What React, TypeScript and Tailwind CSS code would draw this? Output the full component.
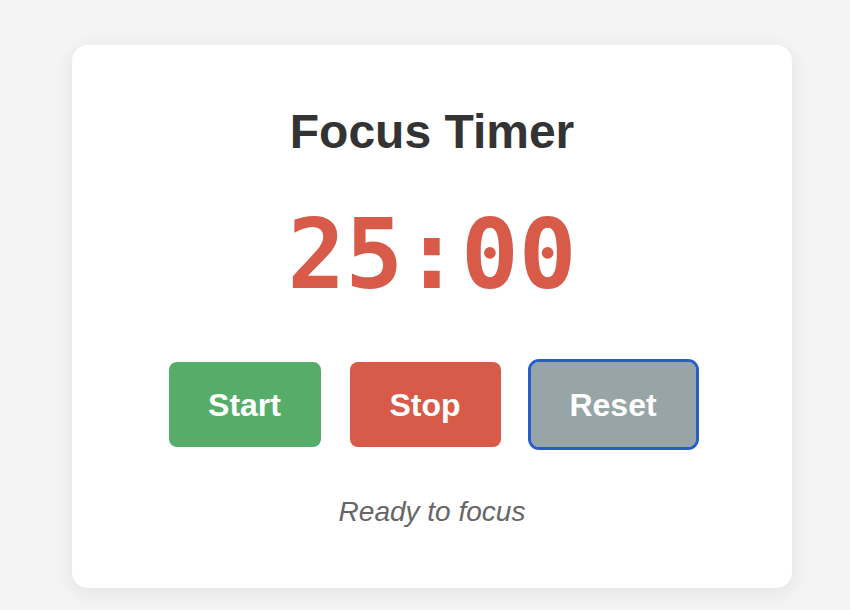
import React, { useState } from 'react';

export default function App() {
  const [status] = useState('Ready to focus');

  return (
    <div className="min-h-[610px] w-[850px] bg-[#f4f4f4] pt-[45px] pl-[72px] font-['Liberation_Sans',Arial,sans-serif]">
      {/* Timer card */}
      <div className="flex h-[543px] w-[720px] flex-col items-center rounded-2xl bg-white pt-[59px] shadow-[0_4px_20px_rgba(0,0,0,0.08)]">
        <h1 className="text-[48px] font-bold leading-[55px] text-[#333333]">Focus Timer</h1>

        <div className="mt-[40px] font-['DejaVu_Sans_Mono',monospace] text-[96px] font-bold leading-[112px] text-[#d85a48]">
          25:00
        </div>

        <div className="mt-[51px] flex items-center">
          <button className="h-[85px] w-[152px] rounded-lg bg-[#56ad6a] text-[32px] font-bold text-white">
            Start
          </button>
          <button className="ml-[29px] h-[85px] w-[151px] rounded-lg bg-[#d85a48] text-[32px] font-bold text-white">
            Stop
          </button>
          <button className="ml-[30px] h-[85px] w-[165px] rounded-lg bg-[#98a5a6] text-[32px] font-bold text-white outline-[3px] outline-solid outline-[#2a5cc8]">
            Reset
          </button>
        </div>

        <p className="mt-[49px] text-[28px] italic leading-[32px] text-[#666666]">{status}</p>
      </div>
    </div>
  );
}
